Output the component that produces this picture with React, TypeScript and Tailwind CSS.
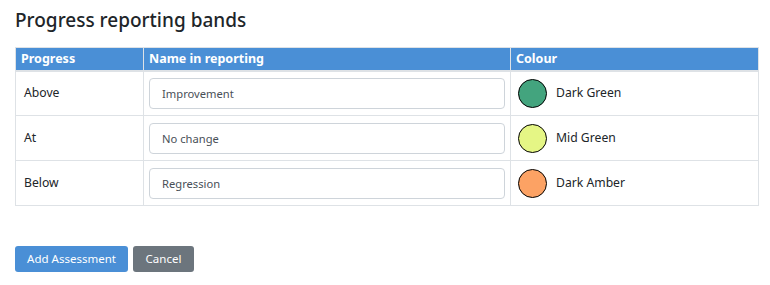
import React from "react";

const rows = [
  { p: "Above", n: "Improvement", c: "Dark Green", col: "#43a47e" },
  { p: "At", n: "No change", c: "Mid Green", col: "#e5f685" },
  { p: "Below", n: "Regression", c: "Dark Amber", col: "#fca264" },
];

export default function App() {
  return (
    <div className="bg-white w-[770px] h-[285px] px-[15px] pt-[6px]" style={{ fontFamily: '"Noto Sans", "Open Sans", sans-serif' }}>
      <h1 className="text-[19px] leading-[28px] font-medium text-[#212529] mb-[13px]">Progress reporting bands</h1>
      <table className="border-collapse w-[743px] table-fixed">
        <colgroup>
          <col className="w-[128px]" />
          <col className="w-[367px]" />
          <col className="w-[248px]" />
        </colgroup>
        <thead>
          <tr className="bg-[#4a8fd6] text-white text-[12.5px] font-bold h-[23px]">
            <th className="text-left px-[5px] py-0 border border-[#dee2e6] border-b-2 leading-[20px]">Progress</th>
            <th className="text-left px-[5px] py-0 border border-[#dee2e6] border-b-2 leading-[20px]">Name in reporting</th>
            <th className="text-left px-[5px] py-0 border border-[#dee2e6] border-b-2 leading-[20px]">Colour</th>
          </tr>
        </thead>
        <tbody>
          {rows.map((r) => (
            <tr key={r.p} className="h-[45px] text-[12.2px] text-[#212529]">
              <td className="border border-[#dee2e6] px-[8px] align-middle">{r.p}</td>
              <td className="border border-[#dee2e6] px-[5px] align-middle">
                <input
                  readOnly
                  value={r.n}
                  className="w-full h-[31px] border border-[#ced4da] rounded-[4px] px-[12px] text-[11.2px] text-[#495057] outline-none"
                  style={{ fontFamily: '"Noto Sans", "Open Sans", sans-serif' }}
                />
              </td>
              <td className="border border-[#dee2e6] px-[7px] align-middle">
                <div className="flex items-center gap-[9px]">
                  <span className="inline-block w-[29px] h-[29px] rounded-full border border-black" style={{ backgroundColor: r.col }} />
                  <span>{r.c}</span>
                </div>
              </td>
            </tr>
          ))}
        </tbody>
      </table>
      <div className="flex gap-[5px] mt-[40px]">
        <button className="h-[26px] w-[113px] rounded-[3px] bg-[#4a8fd6] text-white text-[11.5px]">Add Assessment</button>
        <button className="h-[26px] w-[61px] rounded-[3px] bg-[#6c757d] text-white text-[11.5px]">Cancel</button>
      </div>
    </div>
  );
}
